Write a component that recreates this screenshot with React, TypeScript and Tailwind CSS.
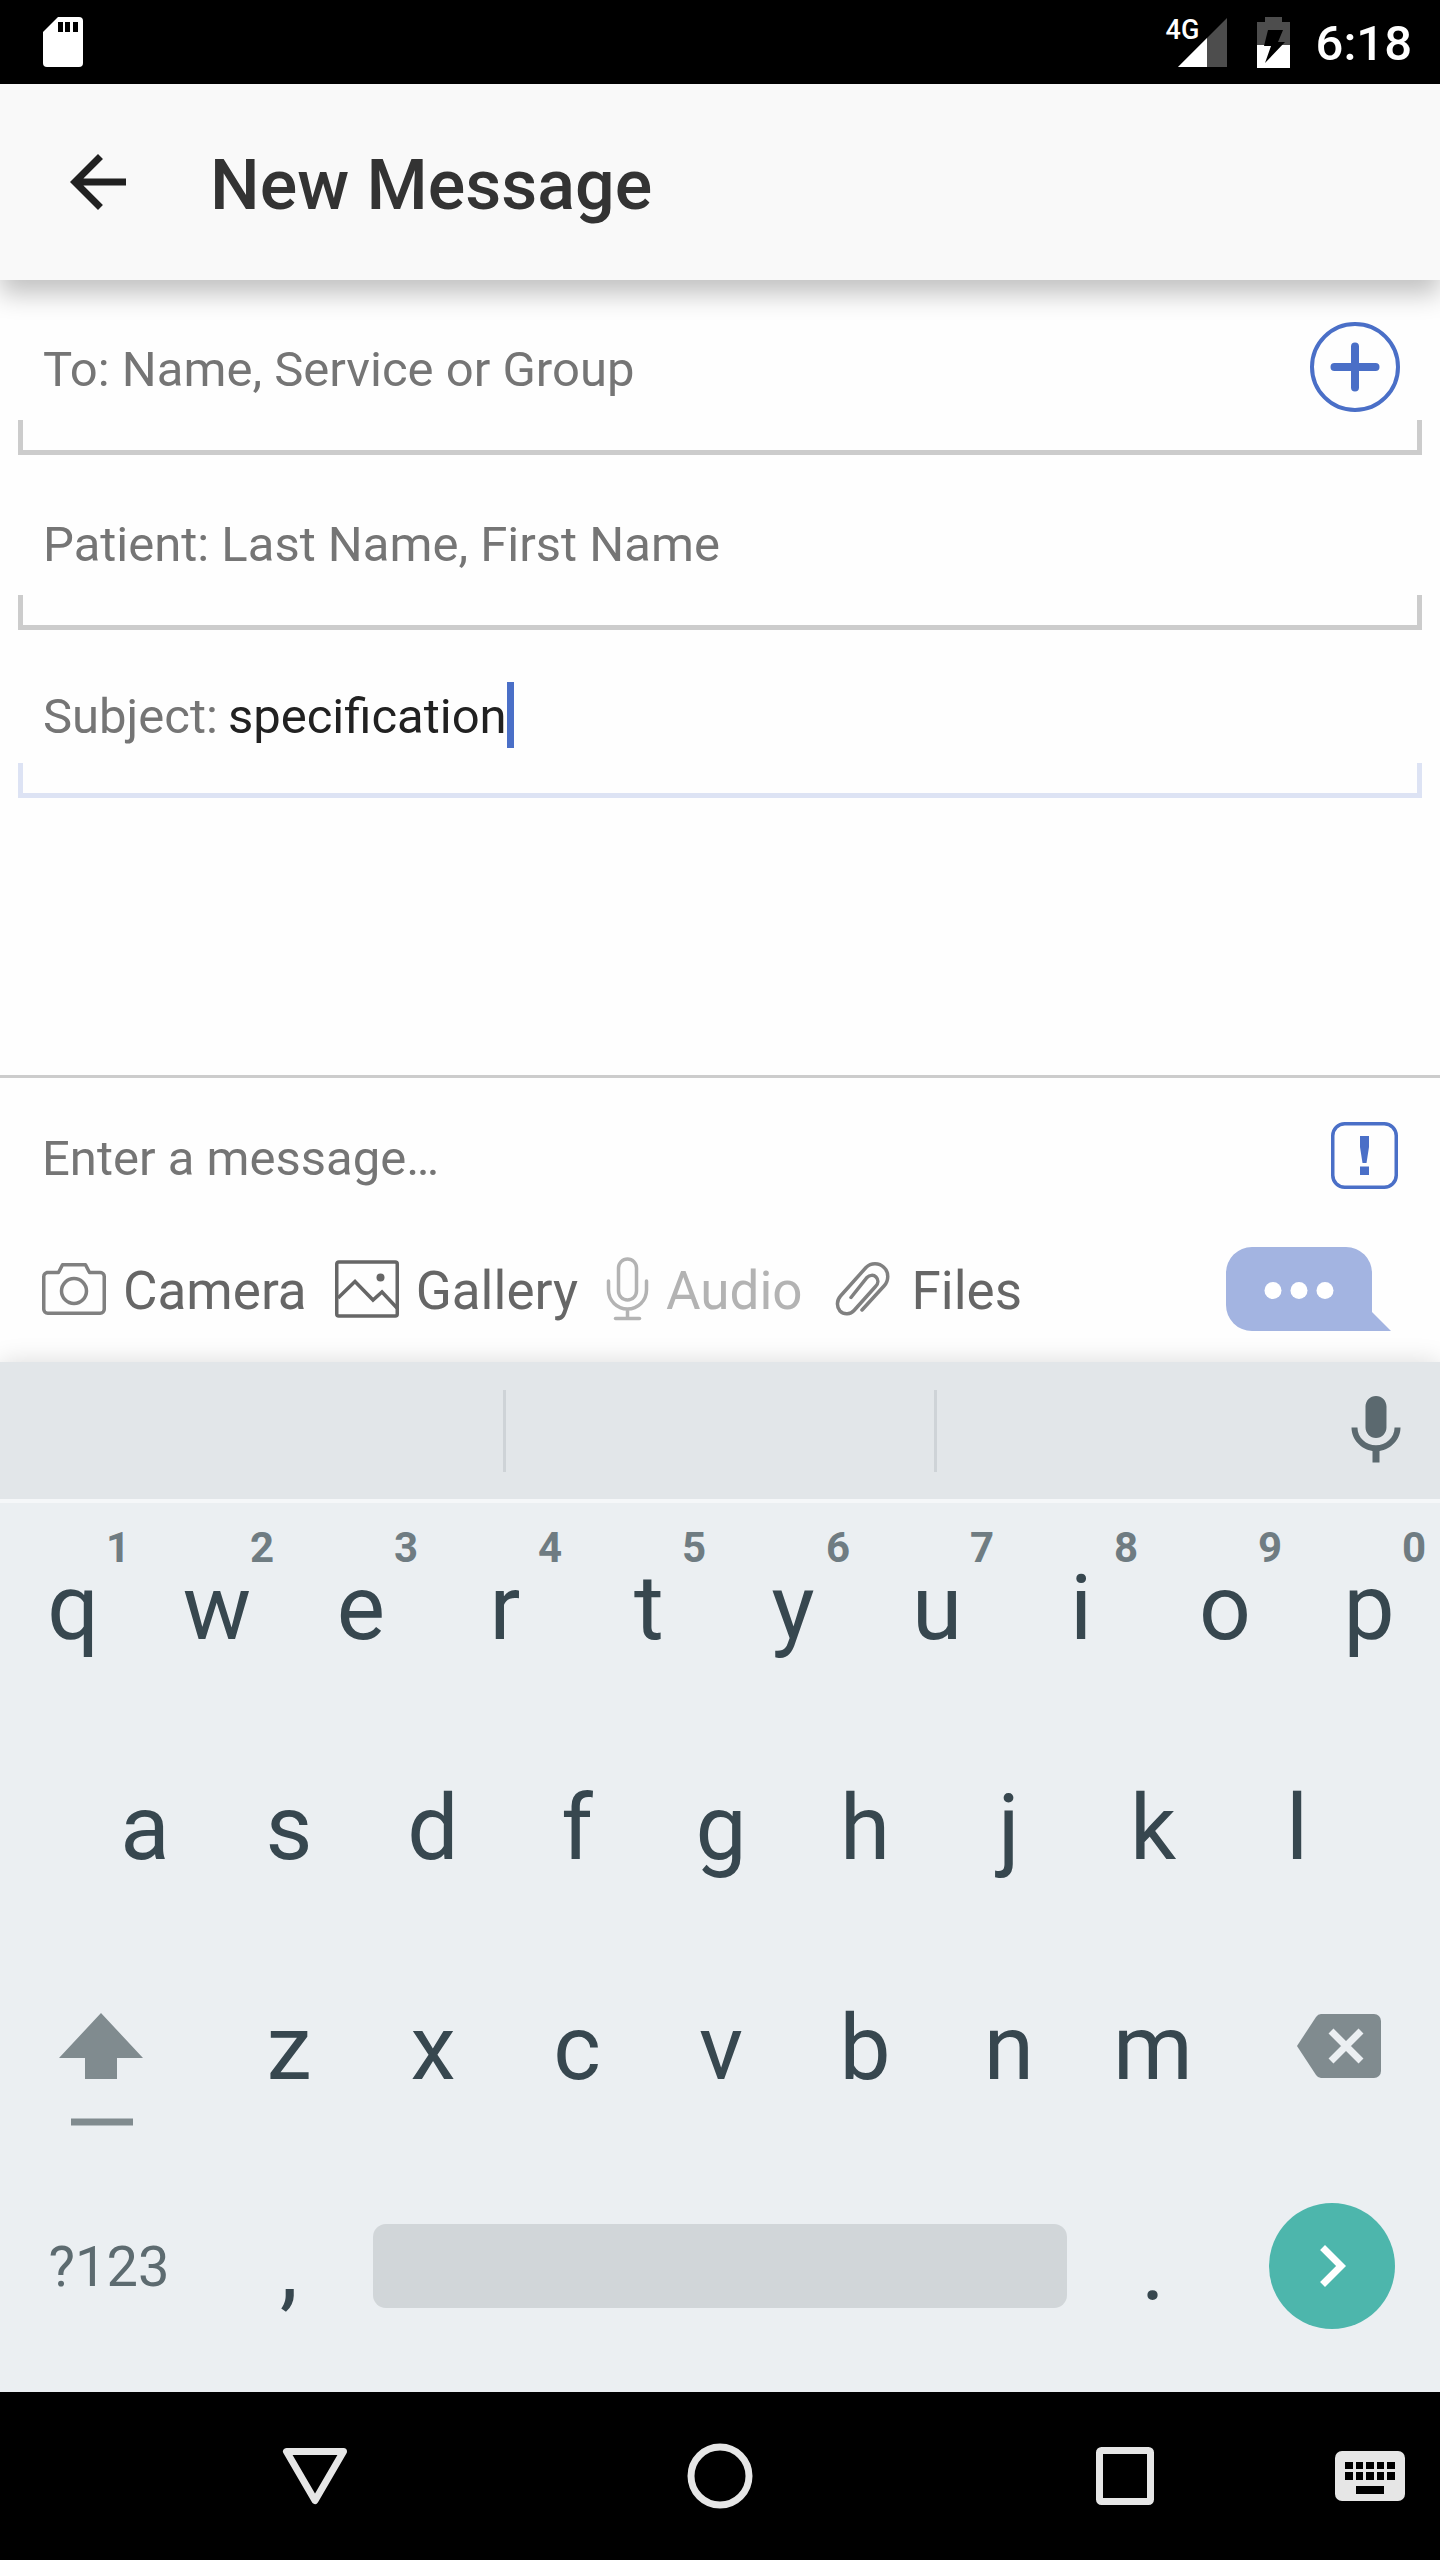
import type { ReactNode } from "react";

const TOP_ROW = ["q", "w", "e", "r", "t", "y", "u", "i", "o", "p"];
const HOME_ROW = ["a", "s", "d", "f", "g", "h", "j", "k", "l"];
const BOTTOM_ROW = ["z", "x", "c", "v", "b", "n", "m"];

function StatusBar() {
  return (
    <div className="flex h-[84px] shrink-0 items-center bg-black pl-[43px] pr-7 text-white">
      <svg width="40" height="50" viewBox="0 0 40 50" aria-hidden="true">
        <path d="M15 0h21a4 4 0 0 1 4 4v42a4 4 0 0 1-4 4H4a4 4 0 0 1-4-4V15z" fill="#fff" />
        <path d="M15 5h5v10h-5zM22 5h5v10h-5zM30 5h5v10h-5z" fill="#000" />
      </svg>
      <div className="relative ml-auto">
        <span className="absolute -left-3 -top-1 text-[27px] leading-8 font-medium">4G</span>
        <svg width="49" height="49" viewBox="0 0 49 49" aria-hidden="true">
          <path d="M49 0v49H0z" fill="#4d4d4d" />
          <path d="M29 20v29H0z" fill="#fff" />
        </svg>
      </div>
      <svg className="ml-[30px]" width="33" height="51" viewBox="0 0 33 51" aria-hidden="true">
        <path d="M8 0h17v5h8v23H0V5h8z" fill="#4d4d4d" />
        <path d="M0 28h33v23H0z" fill="#fff" />
        <path d="M11 13h15l-5 12h7L8 46l6-17H7z" fill="#000" />
      </svg>
      <span className="ml-[26px] pt-1 text-[49px] leading-[56px] font-medium">6:18</span>
    </div>
  );
}

function AppBar() {
  return (
    <header className="relative z-10 flex h-[196px] shrink-0 items-center gap-[70px] bg-[#f9f9f9] pl-14 shadow-[0_14px_24px_rgba(0,0,0,0.24)]">
      <button type="button" aria-label="Back">
        <svg width="84" height="84" viewBox="0 0 24 24" fill="#212121" aria-hidden="true">
          <path d="M20 11H7.83l5.59-5.59L12 4l-8 8 8 8 1.41-1.41L7.83 13H20z" />
        </svg>
      </button>
      <h1 className="pt-1.5 text-[70px] leading-[84px] font-medium text-[#333]">New Message</h1>
    </header>
  );
}

function Bracket({ active }: { active?: boolean }) {
  return (
    <div
      className={
        active
          ? "h-[35px] border-x-[5px] border-b-[5px] border-[#dde3f4]"
          : "h-[35px] border-x-[5px] border-b-[5px] border-[#ccc]"
      }
    />
  );
}

const inputStyle =
  "text-[49px] leading-[66px] text-[#212121] placeholder:text-[#757575] placeholder:opacity-100 outline-none bg-transparent";

function Fields() {
  return (
    <main className="flex-1 px-[18px] pt-[33px]">
      <div className="flex h-[107px] items-center pl-[25px] pr-[22px]">
        <input className={`${inputStyle} min-w-0 flex-1 pt-1.5`} aria-label="To" placeholder="To: Name, Service or Group" />
        <button type="button" aria-label="Add recipient">
          <svg width="90" height="90" viewBox="0 0 90 90" fill="none" stroke="#4a6fc7" aria-hidden="true">
            <circle cx="45" cy="45" r="43" strokeWidth="4" />
            <path d="M24.5 45h41M45 24.5v41" strokeWidth="8" strokeLinecap="round" />
          </svg>
        </button>
      </div>
      <Bracket />
      <div className="flex h-[140px] items-center pl-[25px] pt-10">
        <input className={`${inputStyle} w-full`} aria-label="Patient" placeholder="Patient: Last Name, First Name" />
      </div>
      <Bracket />
      <div className="flex h-[133px] items-center pl-[25px] pt-[38px]">
        <label htmlFor="subject" className="mr-2.5 pt-0.5 text-[49px] leading-[66px] text-[#757575]">
          Subject:
        </label>
        <input id="subject" className={`${inputStyle} field-sizing-content pt-0.5`} defaultValue="specification" />
        <span className="mb-0.5 h-[66px] w-[7px] bg-[#4a6fc7]" />
      </div>
      <Bracket active />
    </main>
  );
}

function Attachment({ icon, label, disabled }: { icon: ReactNode; label: string; disabled?: boolean }) {
  return (
    <button
      type="button"
      disabled={disabled}
      className="flex items-center gap-[17px] text-[53px] leading-[62px] text-[#666] disabled:text-[#b3b3b3]"
    >
      {icon}
      <span className="pt-1">{label}</span>
    </button>
  );
}

function CameraIcon() {
  return (
    <svg width="64" height="52" viewBox="0 0 64 52" fill="none" stroke="#808080" strokeWidth="3.5" aria-hidden="true">
      <path d="M5 9.500H16.500L20.500 1.750H43.500L47.500 9.500H58.250a4 4 0 0 1 4 4V46.250a4 4 0 0 1-4 4H5.750a4 4 0 0 1-4-4V13.500a4 4 0 0 1 4-4z" strokeLinejoin="round" />
      <circle cx="32" cy="28" r="12.500" />
    </svg>
  );
}

function GalleryIcon() {
  return (
    <svg width="64" height="58" viewBox="0 0 64 58" fill="none" stroke="#666" strokeWidth="3.500" aria-hidden="true">
      <rect x="1.750" y="2" width="60.500" height="54" rx="2" />
      <path d="M3 38L20 21.500 38 40l9-8L62 48" />
      <circle cx="45.500" cy="17.500" r="4" fill="#666" stroke="none" />
    </svg>
  );
}

function AudioIcon() {
  return (
    <svg width="43" height="64" viewBox="0 0 42 64" fill="none" stroke="#b3b3b3" strokeWidth="3.500" strokeLinecap="round" aria-hidden="true">
      <rect x="12" y="2" width="18" height="41" rx="9" />
      <path d="M2 24v9a19 19 0 0 0 38 0v-9M21 52v9" />
      <path d="M9 61.500h24" />
    </svg>
  );
}

function ClipIcon() {
  return (
    <svg width="64" height="54" viewBox="0 0 64 54" fill="none" stroke="#808080" strokeWidth="3.5" strokeLinecap="round" aria-hidden="true">
      <path d="M31 48L53 24C58 18.500 58 10 53 5.500C48 0.500 40 0.500 35 5.500L9.500 34C5.500 38.500 5.500 45 9 49C13 53 19.500 52.500 23 48.500L44.500 24.500C47.500 21.500 47.500 17.500 45 15C42.500 12.500 38.500 13 36 15.500L20 35.500" />
    </svg>
  );
}

function Composer() {
  return (
    <section className="shrink-0 border-t-[3px] border-[#ccc] pb-[17px]">
      <div className="flex h-[155px] items-center pl-[42px] pr-[42px]">
        <input className={`${inputStyle} min-w-0 flex-1 pt-1.5`} aria-label="Message" placeholder="Enter a message…" />
        <button type="button" aria-label="Mark as priority">
          <svg width="67" height="67" viewBox="0 0 67 67" aria-hidden="true">
            <rect x="1.750" y="1.750" width="63.500" height="63.500" rx="12" fill="none" stroke="#4a6fc7" strokeWidth="3.500" />
            <path d="M29 14h9v11l-2.500 16h-4L29 25zM29 44.500h9V53h-9z" fill="#4a6fc7" />
          </svg>
        </button>
      </div>
      <div className="flex h-28 items-center gap-7 pl-[42px] pr-[49px]">
        <Attachment icon={<CameraIcon />} label="Camera" />
        <Attachment icon={<GalleryIcon />} label="Gallery" />
        <Attachment icon={<AudioIcon />} label="Audio" disabled />
        <Attachment icon={<ClipIcon />} label="Files" />
        <button type="button" aria-label="Send" className="ml-auto">
          <svg width="165" height="84" viewBox="0 0 165 84" aria-hidden="true">
            <path d="M26 0h94a26 26 0 0 1 26 26v39l19 19H26A26 26 0 0 1 0 58V26A26 26 0 0 1 26 0z" fill="#a3b4e1" />
            <g fill="#fff">
              <circle cx="47" cy="43.500" r="8.500" />
              <circle cx="73" cy="43.500" r="8.500" />
              <circle cx="99" cy="43.500" r="8.500" />
            </g>
          </svg>
        </button>
      </div>
    </section>
  );
}

function Key({ label, hint, className = "" }: { label: string; hint?: string; className?: string }) {
  return (
    <button
      type="button"
      className={`relative col-span-2 flex items-center justify-center pb-2.5 pl-0.5 text-[91px] leading-[106px] text-[#37474f] ${className}`}
    >
      {label}
      {hint && (
        <span className="absolute right-3.5 top-5 text-[42px] leading-[50px] font-bold text-[#6f7c82]">{hint}</span>
      )}
    </button>
  );
}

function Keyboard() {
  return (
    <section className="relative shrink-0 bg-[#ebeff2] shadow-[0_0_24px_rgba(0,0,0,0.14)]" aria-label="Keyboard">
      <div className="flex h-[137px] items-center bg-[#e2e6e9] pl-[3px]">
        <div className="h-[82px] w-[35%] border-r-[3px] border-[#ced3d7]" />
        <div className="h-[82px] w-[30%] border-r-[3px] border-[#ced3d7]" />
        <button type="button" aria-label="Voice input" className="ml-auto mr-[22px]">
          <svg width="84" height="84" viewBox="0 0 24 24" fill="#5b696f" aria-hidden="true">
            <path d="M12 14c1.660 0 2.990-1.340 2.990-3L15 5c0-1.660-1.340-3-3-3S9 3.340 9 5v6c0 1.660 1.340 3 3 3zm5.300-3c0 3-2.540 5.100-5.300 5.100S6.700 14 6.700 11H5c0 3.410 2.720 6.230 6 6.720V21h2v-3.280c3.280-.48 6-3.300 6-6.720h-1.700z" />
          </svg>
        </button>
      </div>
      <div className="grid auto-rows-[220px] grid-cols-20 border-t-4 border-[#f5f7f9] pb-[9px]">
        {TOP_ROW.map((k, i) => (
          <Key key={k} label={k} hint={String((i + 1) % 10)} />
        ))}
        {HOME_ROW.map((k, i) => (
          <Key key={k} label={k} className={i === 0 ? "col-start-2" : ""} />
        ))}
        <button type="button" aria-label="Shift" className="col-span-3 col-start-1 flex items-center justify-center pr-3.5 pt-8">
          <svg width="84" height="113" viewBox="0 0 84 113" fill="#808b8f" aria-hidden="true">
            <path d="M42 0l42 45H58v21H26V45H0zM12 105.500h62v7H12z" />
          </svg>
        </button>
        {BOTTOM_ROW.map((k) => (
          <Key key={k} label={k} />
        ))}
        <button type="button" aria-label="Delete" className="col-span-3 flex items-center justify-center pb-3.5 pl-3.5">
          <svg width="84" height="64" viewBox="0 0 84 64" aria-hidden="true">
            <path d="M24 0h53a7 7 0 0 1 7 7v50a7 7 0 0 1-7 7H24q-3 0-5-3L0 32 19 3q2-3 5-3z" fill="#808b8f" />
            <path d="M34 17l30 30M64 17L34 47" stroke="#ebeff2" strokeWidth="7" />
          </svg>
        </button>
        <button type="button" className="col-span-3 pb-3 pl-0.5 text-[56px] leading-[66px] text-[#5d6b70]">
          ?123
        </button>
        <Key label="," />
        <div className="col-span-10 flex items-center px-[13px] pb-3.5">
          <button type="button" aria-label="Space" className="h-[84px] w-full rounded-[13px] bg-[#d1d6d9]" />
        </div>
        <Key label="." />
        <div className="col-span-3 flex items-center justify-center pb-3.5">
          <button type="button" aria-label="Next" className="flex size-[126px] items-center justify-center rounded-full bg-[#4db6ac]">
            <svg width="84" height="84" viewBox="0 0 24 24" fill="#fff" aria-hidden="true">
              <path d="M10 6L8.590 7.410 13.170 12l-4.580 4.590L10 18l6-6z" />
            </svg>
          </button>
        </div>
      </div>
    </section>
  );
}

function NavBar() {
  return (
    <nav className="flex h-[168px] shrink-0 items-center bg-black pl-[113px]">
      <button type="button" aria-label="Hide keyboard" className="flex flex-1 justify-center">
        <svg width="66" height="60" viewBox="0 0 66 60" fill="none" stroke="#e6e6e6" strokeWidth="7" strokeLinejoin="round" aria-hidden="true">
          <path d="M4.500 5.500h57L33 54.500z" />
        </svg>
      </button>
      <button type="button" aria-label="Home" className="flex flex-1 justify-center">
        <svg width="66" height="66" viewBox="0 0 66 66" fill="none" stroke="#e6e6e6" strokeWidth="7" aria-hidden="true">
          <circle cx="33" cy="33" r="29" />
        </svg>
      </button>
      <button type="button" aria-label="Recent apps" className="flex flex-1 justify-center">
        <svg width="58" height="58" viewBox="0 0 58 58" fill="none" stroke="#e6e6e6" strokeWidth="7" aria-hidden="true">
          <rect x="3.500" y="3.500" width="51" height="51" rx="2" />
        </svg>
      </button>
      <button type="button" aria-label="Switch keyboard" className="flex w-[113px] pl-2">
        <svg width="70" height="50" viewBox="0 0 70 50" aria-hidden="true">
          <rect width="70" height="50" rx="7" fill="#e6e6e6" />
          <path
            d="M10 11h8v7h-8zM21 11h7v7h-7zM31 11h8v7h-8zM42 11h7v7h-7zM52 11h8v7h-8zM10 21h8v8h-8zM21 21h7v8h-7zM31 21h8v8h-8zM42 21h7v8h-7zM52 21h8v8h-8zM21 35h28v8H21z"
            fill="#000"
          />
        </svg>
      </button>
    </nav>
  );
}

export default function App() {
  return (
    <div className="flex min-h-screen flex-col bg-[#fefefe] font-['Roboto',sans-serif]">
      <StatusBar />
      <AppBar />
      <Fields />
      <Composer />
      <Keyboard />
      <NavBar />
    </div>
  );
}
